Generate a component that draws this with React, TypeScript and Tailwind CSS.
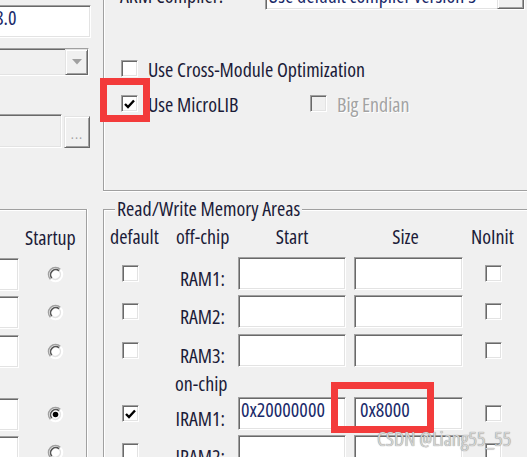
import type { ReactNode } from "react";
import clsx from "clsx";

const sunken =
	"border border-t-[#a0a0a0] border-l-[#a0a0a0] border-r-white border-b-white shadow-[inset_1px_1px_0_#696969,inset_-1px_-1px_0_#e3e3e3]";
const raised =
	"border border-t-[#e3e3e3] border-l-[#e3e3e3] border-r-[#696969] border-b-[#696969] shadow-[inset_1px_1px_0_#fff,inset_-1px_-1px_0_#a0a0a0] bg-[#f0f0f0]";

function Field({
	className,
	children,
	disabled,
}: {
	className?: string;
	children?: ReactNode;
	disabled?: boolean;
}) {
	return (
		<div
			className={clsx(
				sunken,
				"flex h-[33px] shrink-0 items-center overflow-hidden whitespace-nowrap pb-[7px] leading-[22px] text-[#1a2a6a]",
				disabled ? "bg-[#f0f0f0]" : "bg-white",
				className,
			)}
		>
			{children}
		</div>
	);
}

function Check({
	checked,
	disabled,
	className,
}: {
	checked?: boolean;
	disabled?: boolean;
	className?: string;
}) {
	return (
		<div
			className={clsx(
				sunken,
				"flex size-[17px] shrink-0 items-center justify-center",
				disabled ? "bg-[#f0f0f0]" : "bg-white",
				className,
			)}
		>
			{checked && (
				<svg width="11" height="10" viewBox="0 0 11 10" aria-hidden>
					<path
						d="M1 5 L4 8 L10 1.5"
						fill="none"
						stroke="#000"
						strokeWidth="2.4"
					/>
				</svg>
			)}
		</div>
	);
}

function Radio({ on }: { on?: boolean }) {
	return (
		<svg width="17" height="17" viewBox="0 0 17 17" className="ml-[28px] shrink-0" aria-hidden>
			<circle cx="8.5" cy="8.5" r="7" fill="#fff" />
			<path d="M13.45 3.55 A7 7 0 0 0 3.55 13.45" fill="none" stroke="#a0a0a0" strokeWidth="1.5" />
			<path d="M12.1 4.9 A5.1 5.1 0 0 0 4.9 12.1" fill="none" stroke="#555" strokeWidth="1.6" />
			<path d="M3.55 13.45 A7 7 0 0 0 13.45 3.55" fill="none" stroke="#fff" strokeWidth="1.5" />
			<path d="M4.9 12.1 A5.1 5.1 0 0 0 12.1 4.9" fill="none" stroke="#e3e3e3" strokeWidth="1.5" />
			{on && <circle cx="8.5" cy="8.5" r="2.8" fill="#000" />}
		</svg>
	);
}

function Arrow({ color = "#a0a0a0" }: { color?: string }) {
	return (
		<svg width="10" height="6" viewBox="0 0 10 6" aria-hidden>
			<path d="M0 0 H10 L5 5.5 Z" fill={color} />
		</svg>
	);
}

function LeftRow({ h, on }: { h: string; on?: boolean }) {
	return (
		<div className={clsx("flex", h)}>
			<div className="flex h-[33px] items-center">
				<Field className="w-[39px] border-l-0" />
				<Radio on={on} />
			</div>
		</div>
	);
}

function RamRow({
	h,
	label,
	def,
	start,
	size,
}: {
	h: string;
	label: string;
	def?: boolean;
	start?: string;
	size?: string;
}) {
	return (
		<div className={clsx("flex", h)}>
			<div className="flex h-[33px] w-[54px] shrink-0 items-center">
				<Check checked={def} className="ml-[18px]" />
			</div>
			<div className="flex h-[33px] w-[68px] shrink-0 items-end justify-end whitespace-nowrap pr-[1px] leading-[22px]">
				{label}
			</div>
			<Field className="ml-[12px] w-[108px] pl-[2px]">{start}</Field>
			<Field className="ml-[8px] w-[109px] pl-[5px]">{size}</Field>
			<div className="flex h-[33px] items-center">
				<Check className="ml-[22px]" />
			</div>
		</div>
	);
}

export default function App() {
	return (
		<div className="relative h-[457px] w-[527px] overflow-hidden bg-[#f0f0f0] font-['Open_Sans','Liberation_Sans',Arial,sans-serif] text-[20px] text-[#1b1b38] [font-stretch:75%]">
			{/* top: target column and code generation group */}
			<div className="flex h-[191px]">
				<div className="flex w-[91px] shrink-0 flex-col pt-[5px]">
					<Field className="-ml-[20px] h-[32px] w-[111px] pl-[14px]">8.0</Field>
					<div className={clsx(sunken, "-ml-[20px] mt-[10px] flex h-[28px] w-[109px] justify-end bg-[#f0f0f0]")}>
						<div className={clsx(raised, "flex h-full w-[23px] items-center justify-center")}>
							<Arrow />
						</div>
					</div>
					<div className="mt-[38px] flex items-end">
						<Field disabled className="-ml-[20px] h-[34px] w-[82px]" />
						<div className={clsx(raised, "ml-[2px] flex h-[32px] w-[26px] items-end justify-center pb-[6px] text-[14px] leading-none tracking-[1px] text-[#a0a0a0]")}>
							...
						</div>
					</div>
				</div>

				<div className="-mr-[20px] -mt-[40px] ml-[12px] flex h-[231px] flex-1 flex-col border-b border-l border-[#a0a0a0] shadow-[inset_1px_0_0_#fff,0_1px_0_#fff]">
					<div className="mt-[20px] flex h-[30px] items-start">
						<span className="ml-[16px] mt-[5px] w-[145px] shrink-0 whitespace-nowrap leading-[22px]">
							ARM Compiler:
						</span>
						<div className={clsx(sunken, "flex h-[30px] w-[260px] shrink-0 items-start justify-between overflow-hidden bg-white")}>
							<span className="mt-[4px] whitespace-nowrap pl-[2px] leading-[22px] text-[#1a2a6a]">
								Use default compiler version 5
							</span>
							<div className={clsx(raised, "flex h-full w-[27px] shrink-0 items-center justify-center")}>
								<Arrow color="#000" />
							</div>
						</div>
					</div>

					<div className="mt-[50px] flex items-start">
						<Check className="ml-[17px]" />
						<span className="-mt-[1px] ml-[10px] whitespace-nowrap leading-[22px]">
							Use Cross-Module Optimization
						</span>
					</div>
					<div className="mt-[14px] flex items-start">
						<Check checked className="ml-[17px]" />
						<span className="-mt-[1px] ml-[10px] w-[162px] shrink-0 whitespace-nowrap leading-[22px]">
							Use MicroLIB
						</span>
						<Check disabled />
						<span className="-mt-[1px] ml-[10px] whitespace-nowrap leading-[22px] text-[#a3a3a3] [text-shadow:1px_1px_0_#fff]">
							Big Endian
						</span>
					</div>
				</div>
			</div>

			{/* bottom: memory area groups */}
			<div className="mt-[18px] flex">
				<div className="-ml-[20px] h-[260px] w-[107px] shrink-0 border-r border-t border-[#a0a0a0] shadow-[inset_0_1px_0_#fff,1px_0_0_#fff]">
					<div className="h-[48px] pl-[45px] pt-[17px] leading-[22px]">Startup</div>
					<LeftRow h="h-[38px]" />
					<LeftRow h="h-[39px]" />
					<LeftRow h="h-[37px]" />
					<div className="h-[26px]" />
					<LeftRow h="h-[38px]" on />
					<LeftRow h="h-[38px]" />
				</div>

				<div className="-mr-[20px] ml-[16px] h-[260px] flex-1 border-l border-t border-[#a0a0a0] shadow-[inset_1px_1px_0_#fff]">
					<div className="-mt-[12px] ml-[11px] h-[22px] w-fit whitespace-nowrap bg-[#f0f0f0] px-[2px] leading-[22px]">
						Read/Write Memory Areas
					</div>
					<div className="flex h-[37px] whitespace-nowrap pt-[6px] leading-[22px]">
						<span className="w-[54px] shrink-0 pl-[6px]">default</span>
						<span className="w-[68px] shrink-0 pl-[18px]">off-chip</span>
						<span className="ml-[12px] w-[108px] shrink-0 text-center">Start</span>
						<span className="ml-[8px] w-[109px] shrink-0 pr-[6px] text-center">Size</span>
						<span className="ml-[8px]">NoInit</span>
					</div>
					<RamRow h="h-[38px]" label="RAM1:" />
					<RamRow h="h-[39px]" label="RAM2:" />
					<RamRow h="h-[37px]" label="RAM3:" />
					<div className="flex h-[26px] items-center">
						<span className="ml-[71px] whitespace-nowrap leading-[22px]">on-chip</span>
					</div>
					<RamRow h="h-[38px]" label="IRAM1:" def start="0x20000000" size="0x8000" />
					<RamRow h="h-[38px]" label="IRAM2:" />
				</div>
			</div>

			{/* annotations over the screenshot */}
			<div className="absolute left-[100px] top-[78px] h-[44px] w-[50px] border-[7px] border-[#f33b3b]" />
			<div className="absolute left-[331px] top-[382px] h-[51px] w-[103px] border-[7px] border-[#f33b3b]" />
			<div className="absolute left-[377px] top-[428px] whitespace-nowrap text-[20px] leading-[22px] text-[#d4d4d4] [text-shadow:0_0_1px_#6f6f6f]">
				CSDN @Liang55_55
			</div>
		</div>
	);
}
